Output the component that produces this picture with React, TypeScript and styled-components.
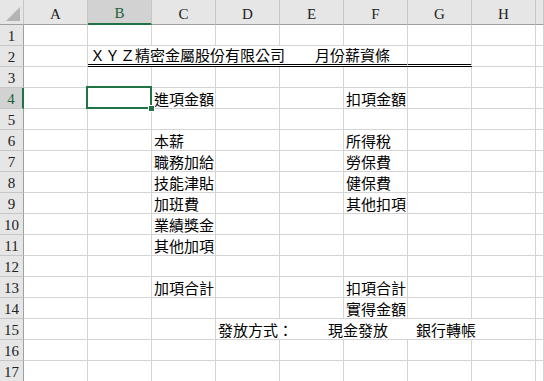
import React from "react";
import styled, { createGlobalStyle } from "styled-components";

const GlobalStyle = createGlobalStyle`
  html, body {
    margin: 0;
    padding: 0;
    background: #ffffff;
    overflow: hidden;
  }
`;

const Sheet = styled.div`
  display: grid;
  grid-template-columns: 24px repeat(8, 64px) 1fr;
  grid-template-rows: 25px repeat(17, 21px);
  width: 544px;
  height: 381px;
  overflow: hidden;
  background: #ffffff;
`;

const Corner = styled.div`
  position: relative;
  background: #e6e6e6;
  border-right: 1px solid #c6c6c6;
  border-bottom: 1px solid #9f9f9f;
  box-sizing: border-box;

  &::after {
    content: "";
    position: absolute;
    right: 3px;
    bottom: 3px;
    width: 0;
    height: 0;
    border-left: 14px solid transparent;
    border-bottom: 14px solid #b4b4b4;
  }
`;

const ColHeader = styled.div<{ $active?: boolean }>`
  display: flex;
  align-items: flex-end;
  justify-content: center;
  padding-bottom: 2px;
  box-sizing: border-box;
  background: ${(p) => (p.$active ? "#d2d2d2" : "#e6e6e6")};
  border-right: 1px solid #c6c6c6;
  border-bottom: ${(p) => (p.$active ? "2px solid #217346" : "1px solid #9f9f9f")};
  color: ${(p) => (p.$active ? "#1e5e3a" : "#222222")};
  font-family: "Liberation Serif", "Noto Sans CJK TC", serif;
  font-size: 15px;
  line-height: 16px;
`;

const RowHeader = styled.div<{ $active?: boolean }>`
  display: flex;
  align-items: flex-end;
  justify-content: center;
  padding-bottom: 1px;
  box-sizing: border-box;
  background: ${(p) => (p.$active ? "#d2d2d2" : "#e6e6e6")};
  border-right: ${(p) => (p.$active ? "2px solid #217346" : "1px solid #9f9f9f")};
  border-bottom: 1px solid #c6c6c6;
  color: ${(p) => (p.$active ? "#1e5e3a" : "#222222")};
  font-family: "Liberation Serif", "Noto Sans CJK TC", serif;
  font-size: 15px;
  line-height: 16px;
`;

const Cell = styled.div<{ $span?: number; $double?: boolean }>`
  position: relative;
  grid-column: span ${(p) => p.$span ?? 1};
  display: flex;
  align-items: flex-end;
  box-sizing: border-box;
  padding: 0 0 0 2px;
  border-right: 1px solid #d4d4d4;
  border-bottom: ${(p) => (p.$double ? "3px double #000000" : "1px solid #d4d4d4")};
  font-family: "Noto Sans CJK TC", "Noto Sans CJK SC", sans-serif;
  font-size: 15px;
  line-height: 18px;
  color: #000000;
  white-space: pre;
  overflow: visible;
`;

const Gap = styled.span<{ $w: number }>`
  display: inline-block;
  width: ${(p) => p.$w}px;
`;

const Selection = styled.div`
  position: absolute;
  z-index: 2;
  top: -2px;
  left: -2px;
  right: -1px;
  bottom: -1px;
  border: 2px solid #217346;
  pointer-events: none;

  &::after {
    content: "";
    position: absolute;
    right: -5px;
    bottom: -5px;
    width: 5px;
    height: 5px;
    background: #217346;
    border: 1px solid #ffffff;
  }
`;

type Entry = { col: number; text: React.ReactNode; span?: number; double?: boolean };

const cols = ["A", "B", "C", "D", "E", "F", "G", "H", ""];

const payment = (
  <>
    發放方式：<Gap $w={35} />現金發放<Gap $w={28} />銀行轉帳
  </>
);

const data: Record<number, Entry[]> = {
  2: [
    { col: 1, span: 5, double: true, text: "ＸＹＺ精密金屬股份有限公司　　月份薪資條" },
    { col: 6, double: true, text: "" },
  ],
  4: [
    { col: 2, text: "進項金額" },
    { col: 5, text: "扣項金額" },
  ],
  6: [
    { col: 2, text: "本薪" },
    { col: 5, text: "所得稅" },
  ],
  7: [
    { col: 2, text: "職務加給" },
    { col: 5, text: "勞保費" },
  ],
  8: [
    { col: 2, text: "技能津貼" },
    { col: 5, text: "健保費" },
  ],
  9: [
    { col: 2, text: "加班費" },
    { col: 5, text: "其他扣項" },
  ],
  10: [{ col: 2, text: "業績獎金" }],
  11: [{ col: 2, text: "其他加項" }],
  13: [
    { col: 2, text: "加項合計" },
    { col: 5, text: "扣項合計" },
  ],
  14: [{ col: 5, text: "實得金額" }],
  15: [{ col: 3, span: 5, text: payment }],
};

const renderRow = (row: number) => {
  const entries = data[row] ?? [];
  const cells: React.ReactNode[] = [];
  let c = 0;
  while (c < cols.length) {
    const entry = entries.find((e) => e.col === c);
    if (entry) {
      cells.push(
        <Cell key={c} $span={entry.span} $double={entry.double}>
          {entry.text}
        </Cell>
      );
      c += entry.span ?? 1;
    } else {
      cells.push(
        <Cell key={c}>{row === 4 && c === 1 ? <Selection /> : null}</Cell>
      );
      c += 1;
    }
  }
  return cells;
};

const App = () => {
  const rows = Array.from({ length: 17 }, (_, i) => i + 1);
  return (
    <>
      <GlobalStyle />
      <Sheet>
        <Corner />
        {cols.map((name, i) => (
          <ColHeader key={name + i} $active={name === "B"}>
            {name}
          </ColHeader>
        ))}
        {rows.map((row) => (
          <React.Fragment key={row}>
            <RowHeader $active={row === 4}>{row}</RowHeader>
            {renderRow(row)}
          </React.Fragment>
        ))}
      </Sheet>
    </>
  );
};

export default App;
